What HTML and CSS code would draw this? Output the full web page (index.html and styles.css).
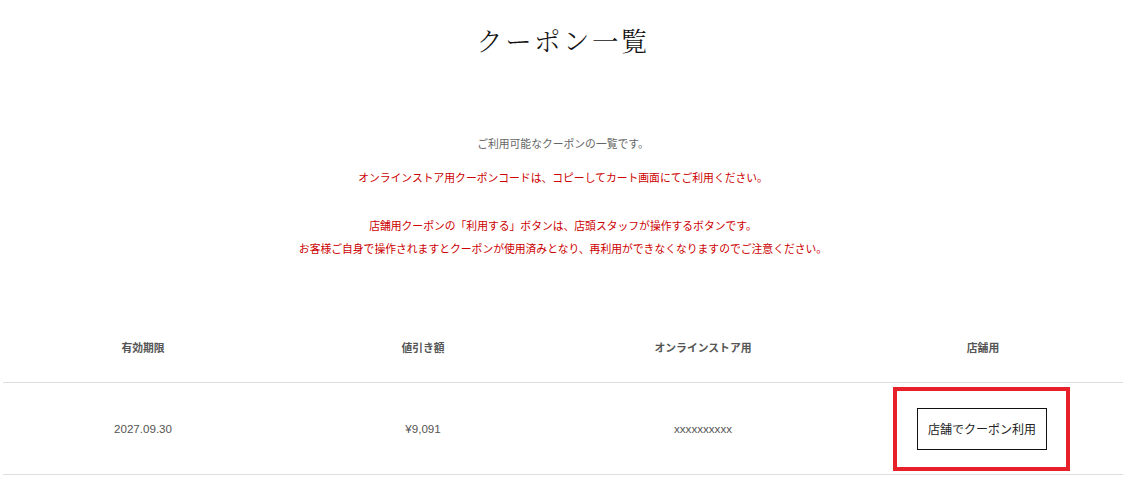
FILE: index.html
```html
<!DOCTYPE html>
<html lang="ja">
<head>
<meta charset="utf-8">
<title>クーポン一覧</title>
<link rel="stylesheet" href="styles.css">
</head>
<body>
<div class="page">
  <h1 class="title">クーポン一覧</h1>
  <p class="intro">ご利用可能なクーポンの一覧です。</p>
  <p class="note note-first">オンラインストア用クーポンコードは、コピーしてカート画面にてご利用ください。</p>
  <p class="note note-second">店舗用クーポンの「利用する」ボタンは、店頭スタッフが操作するボタンです。<br>お客様ご自身で操作されますとクーポンが使用済みとなり、再利用ができなくなりますのでご注意ください。</p>
  <table class="coupons">
    <thead>
      <tr>
        <th>有効期限</th>
        <th>値引き額</th>
        <th>オンラインストア用</th>
        <th>店舗用</th>
      </tr>
    </thead>
    <tbody>
      <tr>
        <td class="val">2027.09.30</td>
        <td class="val">¥9,091</td>
        <td class="val">xxxxxxxxxx</td>
        <td><span class="highlight"><button class="use-btn" type="button">店舗でクーポン利用</button></span></td>
      </tr>
    </tbody>
  </table>
</div>
</body>
</html>
```
FILE: styles.css
```css
html, body {
  margin: 0;
  padding: 0;
  background: #fff;
}
body {
  font-family: "Liberation Sans", "Noto Sans CJK JP", sans-serif;
  color: #555;
}
.page {
  padding: 20px 8px 0 3px;
}
.title {
  margin: 0;
  text-align: center;
  font-family: "Noto Serif CJK JP", "Liberation Serif", "Noto Sans CJK JP", serif;
  font-weight: 300;
  font-size: 26.5px;
  line-height: 40px;
  letter-spacing: 2.4px;
  color: #111;
}
.intro,
.note {
  margin: 0;
  text-align: center;
  font-size: 10.8px;
}
.intro {
  margin-top: 73px;
  line-height: 22px;
  color: #666;
}
.note {
  color: #cc0000;
}
.note-first {
  margin-top: 12px;
  line-height: 22px;
}
.note-second {
  margin-top: 26px;
  line-height: 23px;
}
.coupons {
  margin-top: 51px;
  width: 1120px;
  border-collapse: collapse;
  table-layout: fixed;
}
.coupons th {
  height: 70px;
  padding: 0;
  font-size: 10.8px;
  font-weight: bold;
  color: #555;
  text-align: center;
  vertical-align: middle;
  border-bottom: 1px solid #dddddd;
}
.coupons td {
  height: 91px;
  padding: 0;
  text-align: center;
  vertical-align: middle;
  border-bottom: 1px solid #dddddd;
}
.val {
  font-size: 11.6px;
  color: #555;
}
.highlight {
  display: inline-block;
  border: 4px solid #e8202a;
  padding: 17px 19px 17px 20px;
  line-height: 0;
  margin-right: 3px;
}
.use-btn {
  width: 130px;
  height: 42px;
  margin: 0;
  padding: 0;
  background: #fff;
  border: 1px solid #111;
  font-family: "Liberation Sans", "Noto Sans CJK JP", sans-serif;
  font-size: 12px;
  color: #222;
  cursor: pointer;
}
```
